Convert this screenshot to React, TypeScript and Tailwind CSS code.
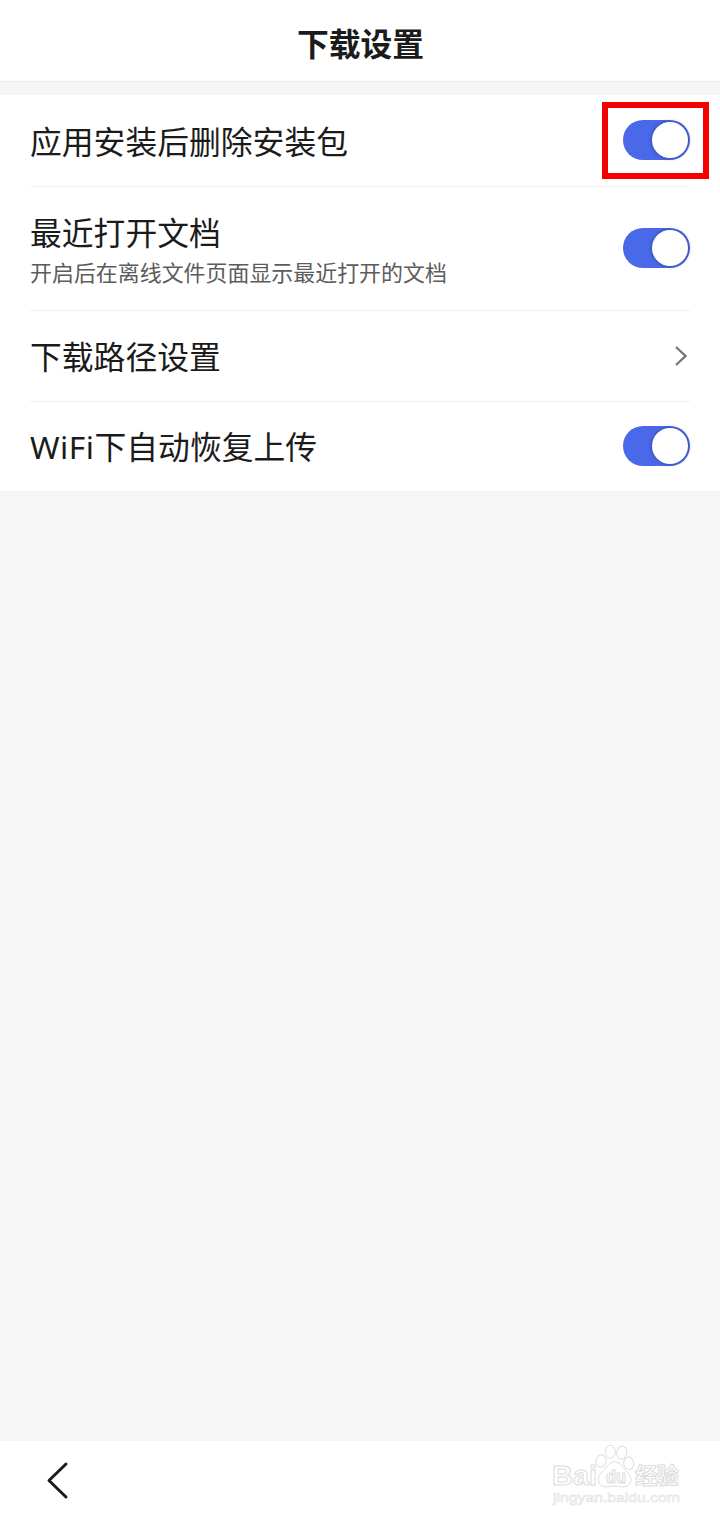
import { useState } from "react";

type Row = {
  title: string;
  desc?: string;
  type: "switch" | "link";
  height: string;
  marked?: boolean;
};

const rows: Row[] = [
  { title: "应用安装后删除安装包", type: "switch", height: "h-[91px]", marked: true },
  {
    title: "最近打开文档",
    desc: "开启后在离线文件页面显示最近打开的文档",
    type: "switch",
    height: "h-[124px]",
  },
  { title: "下载路径设置", type: "link", height: "h-[91px]" },
  { title: "WiFi下自动恢复上传", type: "switch", height: "h-[89px]" },
];

function Toggle({ marked }: { marked?: boolean }) {
  const [on, setOn] = useState(true);

  return (
    <button
      role="switch"
      aria-checked={on}
      onClick={() => setOn(!on)}
      className={`relative flex h-[40px] w-[67px] items-center rounded-full px-[2px] ${
        marked ? "mb-[2px]" : "mb-px"
      } ${on ? "justify-end bg-[#4a69e8]" : "justify-start bg-zinc-300"}`}
    >
      <span className="size-[36px] rounded-full bg-white shadow-[0_0_3px_1px_rgba(40,50,120,0.5)]"></span>
      {marked && (
        <span className="pointer-events-none absolute -left-[21px] -top-[18px] h-[77px] w-[107px] border-6 border-[#f50000]"></span>
      )}
    </button>
  );
}

function Watermark() {
  return (
    <svg
      width="132"
      height="66"
      viewBox="0 0 132 66"
      fill="#fff"
      stroke="#dcdcdc"
      strokeWidth="1"
      className="font-['Liberation_Sans','Noto_Sans_CJK_SC',sans-serif]"
    >
      <text x="2" y="43.500" fontSize="28" fontWeight="700" textLength="45" lengthAdjust="spacingAndGlyphs">
        Bai
      </text>
      <ellipse cx="51" cy="20" rx="5" ry="6.200" transform="rotate(12 51 20)" />
      <ellipse cx="60.300" cy="10.700" rx="5" ry="6.500" />
      <ellipse cx="71.700" cy="11.700" rx="5" ry="6.500" transform="rotate(10 71.700 11.700)" />
      <ellipse cx="78.700" cy="22.300" rx="5" ry="6.200" transform="rotate(-8 78.700 22.300)" />
      <path d="M64.500 20.700c-5.500 0-7 5-11 8.800-3.500 3.300-5.500 6-5 9.700.6 4.800 4 7 8 6.700 3-.2 5-.8 8-.8s5.500.7 8 .8c4.500.2 7.800-2 8.300-6.700.4-3.300-1.800-6.700-4.800-9.500-4-3.800-6-9-11.500-9z" />
      <text x="56" y="41.500" fontSize="18" fontWeight="700" textLength="20" lengthAdjust="spacingAndGlyphs">
        du
      </text>
      <text x="85" y="43" fontSize="22.500" fontWeight="700" textLength="44">
        经验
      </text>
      <text x="3" y="61" fontSize="13" strokeWidth="0.600" stroke="#e2e2e2" textLength="127" lengthAdjust="spacingAndGlyphs">
        jingyan.baidu.com
      </text>
    </svg>
  );
}

export default function App() {
  return (
    <div className="flex h-[1523px] w-[720px] flex-col bg-[#f6f6f6] font-['Noto_Sans','Noto_Sans_CJK_SC',sans-serif] text-[#1b1b1b]">
      <header className="flex h-[82px] items-center justify-center border-b border-[#eaeaea] bg-white pb-[6px] pt-[11px]">
        <h1 className="pl-px font-['Noto_Sans_CJK_SC',sans-serif] text-[31.8px] font-bold leading-none">
          下载设置
        </h1>
      </header>

      <main className="mt-[13px] flex flex-col bg-white pl-[30px] pr-[30px] pt-px">
        {rows.map((row, index) => (
          <div
            key={row.title}
            className={`flex items-center justify-between ${row.height} ${
              index < rows.length - 1 ? "border-b border-[#f0f0f0]" : ""
            }`}
          >
            <div className={`flex flex-col ${row.desc ? "pt-[4px]" : "pt-px"}`}>
              <p className="text-[31.8px] leading-[44px]">
                {row.title.startsWith("WiFi") ? (
                  <>
                    <span className="tracking-[0.5px]">WiFi</span>
                    {row.title.slice(4)}
                  </>
                ) : (
                  row.title
                )}
              </p>
              {row.desc && (
                <p className="text-[21.950px] leading-[36px] text-[#5c5c5c]">{row.desc}</p>
              )}
            </div>
            {row.type === "switch" ? (
              <Toggle marked={row.marked} />
            ) : (
              <svg
                width="16"
                height="22"
                viewBox="0 0 16 22"
                fill="none"
                stroke="#777"
                strokeWidth="2.400"
                className="mr-px"
              >
                <path d="M3 2l9.500 9L3 20" />
              </svg>
            )}
          </div>
        ))}
      </main>

      <footer className="mt-auto flex h-[82px] items-start justify-between bg-white pl-[44px] pr-[38px]">
        <button aria-label="返回" className="mt-[19px]">
          <svg
            width="26"
            height="40"
            viewBox="0 0 26 40"
            fill="none"
            stroke="#1b1b1b"
            strokeWidth="3"
            strokeLinecap="round"
            strokeLinejoin="round"
          >
            <path d="M22 4L5 20.500 22 37" />
          </svg>
        </button>
        <Watermark />
      </footer>
    </div>
  );
}
